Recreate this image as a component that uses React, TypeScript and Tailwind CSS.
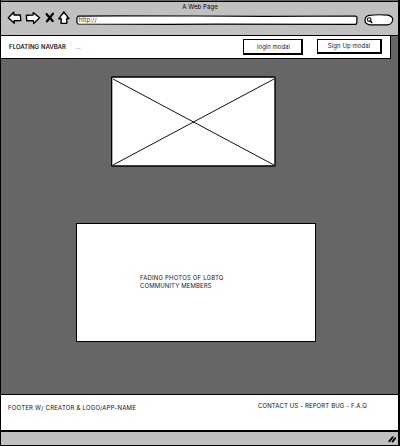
import React from "react";

const ink = { stroke: "#000", strokeWidth: 1.4, strokeLinejoin: "round" as const, strokeLinecap: "round" as const };

function BrowserBar() {
  return (
    <header className="h-[35px] shrink-0 border-t border-b border-black bg-[#c0c0c0]">
      <div className="h-[13px] pl-[1px] text-center text-[6px] leading-[10px] tracking-[0.1px]">A Web Page</div>
      <div className="flex items-start">
        <svg width="75" height="16" viewBox="0 9 75 16" className="mt-[-6px] shrink-0" fill="#fff" {...ink}>
          <path d="M7.3 17.8 12.7 12.2 13 15 19.3 15 19.8 20.6 13.3 20.8 13.2 23.3Z" />
          <path d="M25.4 15.2 32 15 32.3 12.6 38.6 17.8 32.7 23.4 32.4 20.8 25.7 20.7Z" />
          <path d="M45.7 14.2 51.7 21M52 13.6 46 21.3" fill="none" strokeWidth="2.3" />
          <path d="M62.8 11.8 67.9 18.6 65.8 18.5 65.8 23.2 60.1 23.4 60.2 18.7 57.7 18.9Z" />
        </svg>
        <svg width="282" height="10" viewBox="0 0 282 10" className="shrink-0" fill="#fff" {...ink}>
          <path strokeWidth="1.2" d="M2 1.2 40 .8 120 1 190 1.3 279.5 1 281 2.2 280.7 8.8 279 9.3 140 9.1 90 9.4 2 9 .9 7.5 1 2.5Z" />
          <text x="2.6" y="7.1" textLength="18" fontSize="6" fill="#333" stroke="none">http://</text>
        </svg>
        <svg width="30" height="12" viewBox="0 0 30 12" className="mt-[-1px] ml-[6px]" fill="#fff" {...ink}>
          <path strokeWidth="1.2" d="M5 1.4Q14 .2 24 1.2 29 2.5 28.7 6 28 10.6 23 10.8L6 10.9Q.6 9.8 1 6 1.4 2.2 5 1.4Z" />
          <circle cx="5.2" cy="5.6" r="1.8" strokeWidth="1.1" />
          <path d="M6.5 7 7.8 8.5" />
        </svg>
      </div>
    </header>
  );
}

function Navbar() {
  return (
    <nav className="flex h-[23px] w-[390px] shrink-0 items-start border-r-[1.5px] border-b border-black bg-white text-[6px]">
      <span className="mt-[6px] ml-[8px] w-[66.5px] leading-[10px] tracking-[0.12px] whitespace-nowrap [-webkit-text-stroke:0.15px_#000]">FLOATING NAVBAR</span>
      <span className="mt-[6px] w-[167.5px] leading-[10px] text-[#555]">...</span>
      <button className="mt-[3px] h-[16px] w-[60px] border border-r-2 border-b-2 border-black pl-[2px] text-center text-[6px] leading-[14px] text-[#222]">login modal</button>
      <button className="mt-[3px] ml-[14px] h-[15px] w-[65px] border border-r-2 border-b-2 border-black text-center text-[6px] leading-[12px] tracking-[0.08px] text-[#222]">Sign Up modal</button>
    </nav>
  );
}

function Footer() {
  return (
    <footer className="flex h-[36px] shrink-0 items-start justify-between border-t border-black bg-white text-[6px] leading-[10px] whitespace-nowrap text-[#111]">
      <span className="mt-[8px] ml-[7px] tracking-[0.22px]">FOOTER W/ CREATOR &amp; LOGO/APP-NAME</span>
      <span className="mt-[6px] mr-[31px] tracking-[0.14px]">CONTACT US - REPORT BUG - F.A.Q</span>
    </footer>
  );
}

export default function App() {
  return (
    <div className="flex h-[446px] w-[400px] flex-col border-r-2 border-b-2 border-l border-black bg-[#666] pt-px font-['Inter','Open_Sans',sans-serif] text-black">
      <BrowserBar />
      <Navbar />
      <main className="flex h-[335px] shrink-0 flex-col">
        <svg width="165" height="91" viewBox="0 0 165 91" className="mt-[17px] ml-[110px]">
          <rect x=".6" y="1" width="163.4" height="89" rx="1" fill="#fff" stroke="#000" strokeWidth="1.4" />
          <path d="M2 3 163 89M163 3 2 89" stroke="#111" strokeWidth="1" />
        </svg>
        <section className="mt-[56px] ml-[75px] h-[119px] w-[240px] border-[1.5px] border-black bg-white pt-[50px] pl-[63px] text-[6px] leading-[8px] text-[#222]">
          <p className="tracking-[0.18px]">FADING PHOTOS OF LGBTQ</p>
          <p className="tracking-[0.1px]">COMMUNITY MEMBERS</p>
        </section>
      </main>
      <Footer />
      <div className="flex h-[15px] shrink-0 justify-end border-t-2 border-black bg-[#c0c0c0]">
        <svg width="12" height="11" viewBox="0 0 12 11" className="mt-px" fill="none" {...ink}>
          <path strokeWidth="1.8" d="M3.2 8.3 6.8 4.2M6.5 8.6 9.2 5.2" />
        </svg>
      </div>
    </div>
  );
}
